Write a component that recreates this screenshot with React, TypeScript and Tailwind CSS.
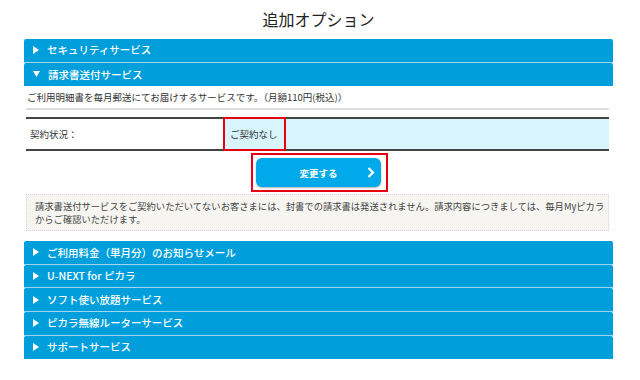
import type { ReactNode } from 'react'

function Bar({ open = false, last = false, children }: { open?: boolean; last?: boolean; children: ReactNode }) {
  return (
    <div
      className={`flex h-[23.6px] items-center rounded-t-[2px] bg-[#009fdc] pl-[9px] text-[10.5px] font-medium text-white ${
        last ? '' : 'border-b border-[#9cd7f1]'
      }`}
    >
      {open ? (
        <svg width="7" height="6" viewBox="0 0 7 6" className="shrink-0">
          <polygon points="0,0 7,0 3.5,6" fill="white" />
        </svg>
      ) : (
        <svg width="6" height="8" viewBox="0 0 6 8" className="shrink-0">
          <polygon points="0,0 6,4 0,8" fill="white" />
        </svg>
      )}
      <span className="ml-[8px]">{children}</span>
    </div>
  )
}

export default function App() {
  return (
    <div className="h-[380px] w-[640px] bg-white font-['Meiryo','Noto_Sans_CJK_JP',sans-serif] text-[#333]">
      <div className="ml-[24px] w-[589px]">
        <h1 className="h-[39px] pt-[7px] text-center text-[16px] leading-[24px] text-[#222]">追加オプション</h1>

        <Bar>セキュリティサービス</Bar>
        <Bar open last>
          請求書送付サービス
        </Bar>

        <div className="ml-[2px] mr-[4px]">
          <p className="flex h-[22px] items-center pl-[1px] text-[9.5px]">
            ご利用明細書を毎月郵送にてお届けするサービスです。（月額110円(税込)）
          </p>
          <div className="h-[2px] bg-[#dcdcdc]" />

          <div className="mt-[7px] flex h-[34px] border-y-2 border-[#444] text-[9.5px]">
            <div className="flex w-[197px] items-center pl-[4px]">契約状況：</div>
            <div className="flex flex-1 bg-[#d8f4fd]">
              <div className="-my-[2px] flex w-[63px] items-center border-2 border-[#e60012] pl-[5px]">ご契約なし</div>
            </div>
          </div>

          <div className="flex justify-center pl-[4px]">
            <div className="mt-[2px] h-[39px] w-[137px] border-2 border-[#e60012] py-[3px] pl-[3px] pr-[5px]">
              <button className="relative flex h-[29px] w-full items-center justify-center rounded-[6px] bg-[#00a9e9] text-[9.5px] font-bold text-white shadow-[0_1px_2px_rgba(0,0,0,0.3)]">
                変更する
                <svg width="8" height="11" viewBox="0 0 8 11" className="absolute right-[6px] top-[9px]">
                  <polyline points="1.5,1 6,5.5 1.5,10" fill="none" stroke="white" strokeWidth="2.2" />
                </svg>
              </button>
            </div>
          </div>

          <div className="mt-[2px] border border-dotted border-[#d6d6d6] bg-[#f6f5f1] py-[5px] pl-[8px] pr-[2px] text-[9.3px] leading-[12.5px] text-[#444]">
            請求書送付サービスをご契約いただいてないお客さまには、封書での請求書は発送されません。請求内容につきましては、毎月Myピカラからご確認いただけます。
          </div>
        </div>

        <div className="mt-[10px]">
          <Bar>ご利用料金（単月分）のお知らせメール</Bar>
          <Bar>U-NEXT for ピカラ</Bar>
          <Bar>ソフト使い放題サービス</Bar>
          <Bar>ピカラ無線ルーターサービス</Bar>
          <Bar last>サポートサービス</Bar>
        </div>
      </div>
    </div>
  )
}
